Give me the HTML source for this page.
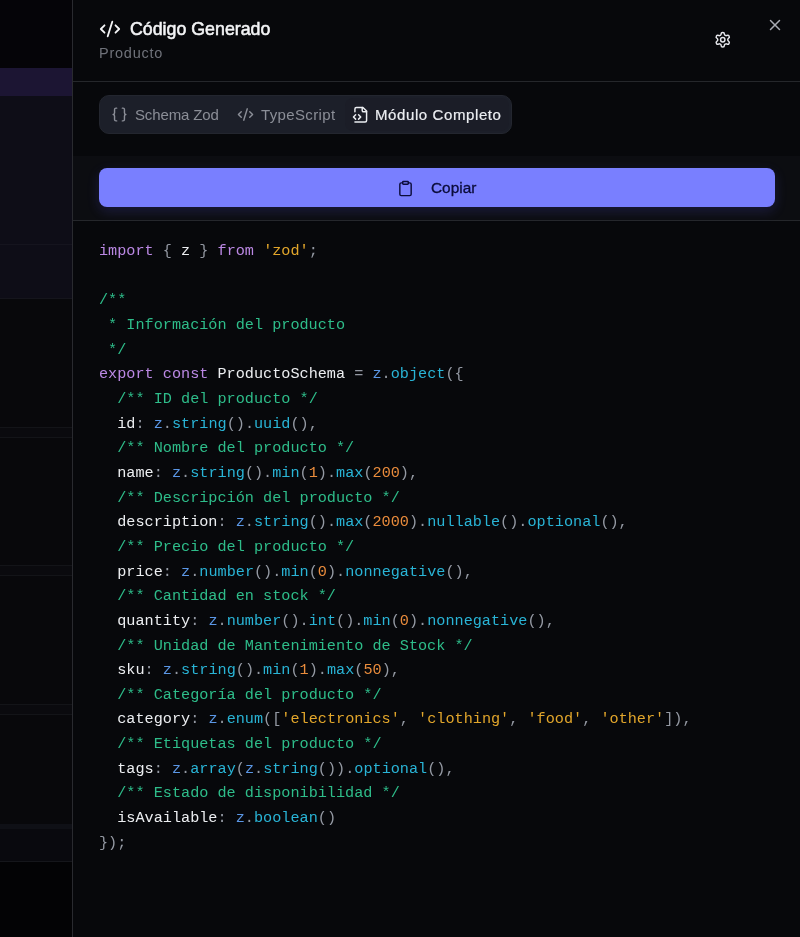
<!DOCTYPE html>
<html lang="es">
<head>
<meta charset="utf-8">
<title>Código Generado</title>
<style>
*{box-sizing:border-box;margin:0;padding:0}
html,body{width:800px;height:937px;overflow:hidden;background:#07080b}
body{position:relative;font-family:"Liberation Sans",sans-serif;color:#e5e7eb}
.abs{position:absolute}
/* dimmed page behind the drawer */
#back{left:0;top:0;width:72px;height:937px;background:#08080b;overflow:hidden}
#back div{position:absolute;left:0;width:72px}
/* drawer */
#panel{left:72px;top:0;width:728px;height:937px;background:#07080b;border-left:1px solid #292a2f}
.hline{position:absolute;left:73px;width:727px;height:1px;background:#25272b}
svg{position:absolute;fill:none;stroke-linecap:round;stroke-linejoin:round;stroke-width:2}
.t{position:absolute;white-space:nowrap;line-height:1;will-change:transform}
#title{left:130px;top:19px;font-size:17.8px;color:#f3f4f6;line-height:20px;-webkit-text-stroke:.55px #f3f4f6}
#sub{left:99px;top:44px;font-size:14.5px;letter-spacing:.75px;color:#6f727a;line-height:18px}
#tabs{left:99px;top:95px;width:413px;height:39px;border-radius:10px;background:#1c1f29;border:1px solid #23262f}
#tabact{left:345px;top:98px;width:164px;height:33px;border-radius:8px;background:#1b1d27}
.tab{font-size:15px;line-height:20px;top:105px;color:#8b8e97}
#toolbar{left:73px;top:156px;width:727px;height:65px;background:#0c0d11}
#btn{left:99px;top:168.3px;width:675.7px;height:38.8px;border-radius:8px;background:#797fff;box-shadow:0 4px 12px rgba(99,102,241,.22),0 2px 4px rgba(0,0,0,.5)}
#copy{left:431.4px;top:177.6px;font-size:15.4px;line-height:20px;color:#0b0c3a;-webkit-text-stroke:.3px #0b0c3a}
pre{position:absolute;will-change:transform;left:99px;top:239.25px;font-family:"Liberation Mono",monospace;font-size:15.2px;line-height:24.66px;color:#eceef1;white-space:pre;tab-size:2}
.k{color:#bb88e4}.s{color:#e2a62b}.c{color:#2ebd8a}.z{color:#5b97e6}.m{color:#29b4d6}.n{color:#ea8c3c}.p{color:#9499a3}
</style>
</head>
<body>
<div id="back" class="abs">
  <div style="top:0;height:68px;background:#050408"></div>
  <div style="top:68px;height:28px;background:#1c1533"></div>
  <div style="top:96px;height:202px;background:#0e0d17"></div>
  <div style="top:244px;height:1px;background:#15141e"></div>
  <div style="top:298px;height:1px;background:#15151c"></div>
  <div style="top:299px;height:128px;background:#08080b"></div>
  <div style="top:427px;height:11px;background:#0a0a0e;border-top:1px solid #131418;border-bottom:1px solid #131418"></div>
  <div style="top:565px;height:11px;background:#0a0a0e;border-top:1px solid #131418;border-bottom:1px solid #131418"></div>
  <div style="top:704px;height:11px;background:#0a0a0e;border-top:1px solid #131418;border-bottom:1px solid #131418"></div>
  <div style="top:824px;height:38px;background:#09090e;border-top:5px solid #0f1016;border-bottom:1px solid #15161b"></div>
  <div style="top:862px;height:75px;background:#030305"></div>
</div>
<div id="panel" class="abs"></div>

<!-- header -->
<svg style="left:99px;top:17.6px" width="22" height="22" viewBox="0 0 24 24" stroke="#f3f4f6"><path d="m18 16 4-4-4-4"/><path d="m6 8-4 4 4 4"/><path d="m14.5 4-5 16"/></svg>
<div id="title" class="t">Código Generado</div>
<div id="sub" class="t">Producto</div>
<svg style="left:713.75px;top:30.85px" width="17.5" height="17.5" viewBox="0 0 24 24" stroke="#e6e7ec"><path d="M12.22 2h-.44a2 2 0 0 0-2 2v.18a2 2 0 0 1-1 1.73l-.43.25a2 2 0 0 1-2 0l-.15-.08a2 2 0 0 0-2.73.73l-.22.38a2 2 0 0 0 .73 2.73l.15.1a2 2 0 0 1 1 1.72v.51a2 2 0 0 1-1 1.74l-.15.09a2 2 0 0 0-.73 2.73l.22.38a2 2 0 0 0 2.73.73l.15-.08a2 2 0 0 1 2 0l.43.25a2 2 0 0 1 1 1.73V20a2 2 0 0 0 2 2h.44a2 2 0 0 0 2-2v-.18a2 2 0 0 1 1-1.73l.43-.25a2 2 0 0 1 2 0l.15.08a2 2 0 0 0 2.73-.73l.22-.39a2 2 0 0 0-.73-2.73l-.15-.08a2 2 0 0 1-1-1.74v-.5a2 2 0 0 1 1-1.74l.15-.09a2 2 0 0 0 .73-2.73l-.22-.38a2 2 0 0 0-2.73-.73l-.15.08a2 2 0 0 1-2 0l-.43-.25a2 2 0 0 1-1-1.73V4a2 2 0 0 0-2-2z"/><circle cx="12" cy="12" r="3"/></svg>
<svg style="left:765.75px;top:15.7px" width="18" height="18" viewBox="0 0 24 24" stroke="#a9acb4"><path d="M18 6 6 18"/><path d="m6 6 12 12"/></svg>
<div class="hline" style="top:81px"></div>

<!-- tabs -->
<div id="tabs" class="abs"></div>
<div id="tabact" class="abs"></div>
<svg style="left:111.4px;top:105.55px" width="17" height="17" viewBox="0 0 24 24" stroke="#8b8e97"><path d="M8 3H7a2 2 0 0 0-2 2v5a2 2 0 0 1-2 2 2 2 0 0 1 2 2v5c0 1.1.9 2 2 2h1"/><path d="M16 21h1a2 2 0 0 0 2-2v-5c0-1.1.9-2 2-2a2 2 0 0 1-2-2V5a2 2 0 0 0-2-2h-1"/></svg>
<div class="t tab" style="left:134.6px;letter-spacing:-.13px">Schema Zod</div>
<svg style="left:236.8px;top:105.55px" width="17" height="17" viewBox="0 0 24 24" stroke="#8b8e97"><path d="m18 16 4-4-4-4"/><path d="m6 8-4 4 4 4"/><path d="m14.5 4-5 16"/></svg>
<div class="t tab" style="left:260.6px;letter-spacing:.36px">TypeScript</div>
<svg style="left:351.8px;top:105.75px" width="17.5" height="17.5" viewBox="0 0 24 24" stroke="#eceef2"><path d="M4 22h14a2 2 0 0 0 2-2V7l-5-5H6a2 2 0 0 0-2 2v4"/><path d="M14 2v4a2 2 0 0 0 2 2h4"/><path d="m5 12-3 3 3 3"/><path d="m9 18 3-3-3-3"/></svg>
<div class="t tab" style="left:375px;color:#eceef2;letter-spacing:.6px;-webkit-text-stroke:.2px #eceef2">Módulo Completo</div>

<!-- toolbar -->
<div id="toolbar" class="abs"></div>
<div class="hline" style="top:220px"></div>
<div id="btn" class="abs"></div>
<svg style="left:397.4px;top:179.6px" width="17" height="17" viewBox="0 0 24 24" stroke="#0b0c3a"><rect x="8" y="2" width="8" height="4" rx="1" ry="1"/><path d="M16 4h2a2 2 0 0 1 2 2v14a2 2 0 0 1-2 2H6a2 2 0 0 1-2-2V6a2 2 0 0 1 2-2h2"/></svg>
<div id="copy" class="t">Copiar</div>

<pre><span class="k">import</span> <span class="p">{</span> z <span class="p">}</span> <span class="k">from</span> <span class="s">'zod'</span><span class="p">;</span>

<span class="c">/**</span>
<span class="c"> * Información del producto</span>
<span class="c"> */</span>
<span class="k">export</span> <span class="k">const</span> ProductoSchema <span class="p">=</span> <span class="z">z</span><span class="p">.</span><span class="m">object</span><span class="p">({</span>
  <span class="c">/** ID del producto */</span>
  id<span class="p">:</span> <span class="z">z</span><span class="p">.</span><span class="m">string</span><span class="p">().</span><span class="m">uuid</span><span class="p">(),</span>
  <span class="c">/** Nombre del producto */</span>
  name<span class="p">:</span> <span class="z">z</span><span class="p">.</span><span class="m">string</span><span class="p">().</span><span class="m">min</span><span class="p">(</span><span class="n">1</span><span class="p">).</span><span class="m">max</span><span class="p">(</span><span class="n">200</span><span class="p">),</span>
  <span class="c">/** Descripción del producto */</span>
  description<span class="p">:</span> <span class="z">z</span><span class="p">.</span><span class="m">string</span><span class="p">().</span><span class="m">max</span><span class="p">(</span><span class="n">2000</span><span class="p">).</span><span class="m">nullable</span><span class="p">().</span><span class="m">optional</span><span class="p">(),</span>
  <span class="c">/** Precio del producto */</span>
  price<span class="p">:</span> <span class="z">z</span><span class="p">.</span><span class="m">number</span><span class="p">().</span><span class="m">min</span><span class="p">(</span><span class="n">0</span><span class="p">).</span><span class="m">nonnegative</span><span class="p">(),</span>
  <span class="c">/** Cantidad en stock */</span>
  quantity<span class="p">:</span> <span class="z">z</span><span class="p">.</span><span class="m">number</span><span class="p">().</span><span class="m">int</span><span class="p">().</span><span class="m">min</span><span class="p">(</span><span class="n">0</span><span class="p">).</span><span class="m">nonnegative</span><span class="p">(),</span>
  <span class="c">/** Unidad de Mantenimiento de Stock */</span>
  sku<span class="p">:</span> <span class="z">z</span><span class="p">.</span><span class="m">string</span><span class="p">().</span><span class="m">min</span><span class="p">(</span><span class="n">1</span><span class="p">).</span><span class="m">max</span><span class="p">(</span><span class="n">50</span><span class="p">),</span>
  <span class="c">/** Categoría del producto */</span>
  category<span class="p">:</span> <span class="z">z</span><span class="p">.</span><span class="m">enum</span><span class="p">([</span><span class="s">'electronics'</span><span class="p">,</span> <span class="s">'clothing'</span><span class="p">,</span> <span class="s">'food'</span><span class="p">,</span> <span class="s">'other'</span><span class="p">]),</span>
  <span class="c">/** Etiquetas del producto */</span>
  tags<span class="p">:</span> <span class="z">z</span><span class="p">.</span><span class="m">array</span><span class="p">(</span><span class="z">z</span><span class="p">.</span><span class="m">string</span><span class="p">()).</span><span class="m">optional</span><span class="p">(),</span>
  <span class="c">/** Estado de disponibilidad */</span>
  isAvailable<span class="p">:</span> <span class="z">z</span><span class="p">.</span><span class="m">boolean</span><span class="p">()</span>
<span class="p">});</span></pre>
</body>
</html>
